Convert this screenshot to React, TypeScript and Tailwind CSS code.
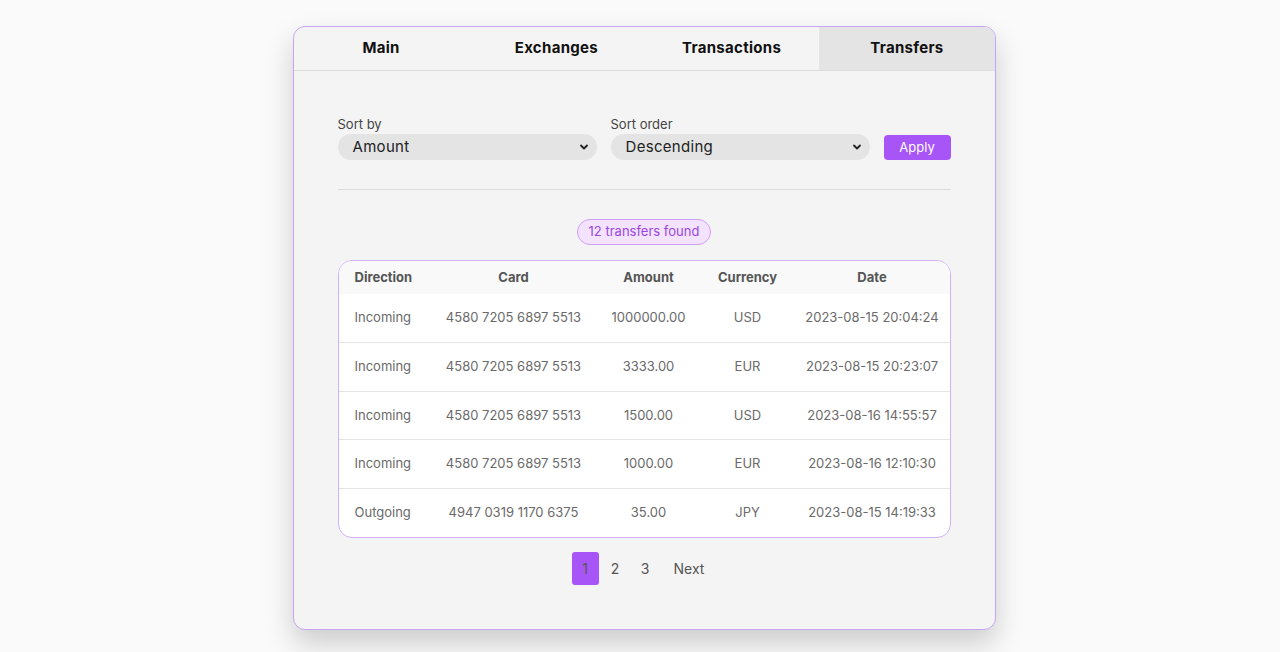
import React, { useState } from 'react';

const tabs = ['Main', 'Exchanges', 'Transactions', 'Transfers'];

const transfers = [
  { direction: 'Incoming', card: '4580 7205 6897 5513', amount: '1000000.00', currency: 'USD', date: '2023-08-15 20:04:24' },
  { direction: 'Incoming', card: '4580 7205 6897 5513', amount: '3333.00', currency: 'EUR', date: '2023-08-15 20:23:07' },
  { direction: 'Incoming', card: '4580 7205 6897 5513', amount: '1500.00', currency: 'USD', date: '2023-08-16 14:55:57' },
  { direction: 'Incoming', card: '4580 7205 6897 5513', amount: '1000.00', currency: 'EUR', date: '2023-08-16 12:10:30' },
  { direction: 'Outgoing', card: '4947 0319 1170 6375', amount: '35.00', currency: 'JPY', date: '2023-08-15 14:19:33' },
];

const Chevron = () => (
  <svg width="10" height="10" viewBox="0 0 10 10" className="text-[#222]">
    <path d="M2 3.5 L5 6.5 L8 3.5" fill="none" stroke="currentColor" strokeWidth="1.8" strokeLinecap="round" strokeLinejoin="round" />
  </svg>
);

const App = () => {
  const [tab, setTab] = useState<string>('Transfers');
  const [page, setPage] = useState<number>(1);

  return (
    <div className="min-h-[652px] bg-[#fafafa] flex justify-center pt-[26px] pl-[8px] font-['Inter',sans-serif]">
      <div className="w-[703px] h-[604px] bg-[#f4f4f4] border border-[#c9a3f5] rounded-[12px] shadow-[0_14px_28px_rgba(0,0,0,0.18)] overflow-hidden flex flex-col">
        <div className="grid grid-cols-4 h-[44px] border-b border-[#dcdcdc] shrink-0">
          {tabs.map((t) => (
            <button
              key={t}
              onClick={() => setTab(t)}
              className={`text-[15px] font-bold text-[#111] tracking-[0.3px] ${tab === t ? 'bg-[#e4e4e4]' : ''}`}
            >
              {t}
            </button>
          ))}
        </div>

        <div className="px-[44px] pt-[45px] flex flex-col">
          <div className="flex items-end gap-[14px]">
            <label className="flex flex-col w-[259px]">
              <span className="text-[13px] text-[#444] leading-[16px] mb-[2px]">Sort by</span>
              <div className="h-[26px] bg-[#e4e4e4] rounded-full flex items-center pl-[15px] pr-[8px]">
                <span className="text-[15px] text-[#222] flex-1 tracking-[0.3px]">Amount</span>
                <Chevron />
              </div>
            </label>
            <label className="flex flex-col w-[259px]">
              <span className="text-[13px] text-[#444] leading-[16px] mb-[2px]">Sort order</span>
              <div className="h-[26px] bg-[#e4e4e4] rounded-full flex items-center pl-[15px] pr-[8px]">
                <span className="text-[15px] text-[#222] flex-1 tracking-[0.3px]">Descending</span>
                <Chevron />
              </div>
            </label>
            <button className="w-[67px] h-[25px] bg-[#a855f7] text-white text-[13px] rounded-[4px]">
              Apply
            </button>
          </div>

          <div className="h-px bg-[#dcdcdc] mt-[29px]" />

          <div className="flex justify-center mt-[29px]">
            <span className="h-[26px] px-[11px] flex items-center rounded-full bg-[#f3e3ff] border border-[#cf9ff7] text-[13px] text-[#9b46e3]">
              12 transfers found
            </span>
          </div>

          <div className="mt-[15px] border border-[#d4b0f7] rounded-[14px] overflow-hidden bg-white">
            <table className="w-full table-fixed border-collapse text-[13px]">
              <colgroup>
                <col className="w-[94px]" />
                <col className="w-[162px]" />
                <col className="w-[108px]" />
                <col className="w-[90px]" />
                <col className="w-[159px]" />
              </colgroup>
              <thead>
                <tr className="h-[33px] bg-[#f9f9f9] text-[#555]">
                  <th className="text-left pl-[16px] font-bold">Direction</th>
                  <th className="text-center font-bold">Card</th>
                  <th className="text-center font-bold">Amount</th>
                  <th className="text-center font-bold">Currency</th>
                  <th className="text-center font-bold">Date</th>
                </tr>
              </thead>
              <tbody>
                {transfers.map((r, i) => (
                  <tr key={i} className={`h-[48.5px] text-[#6a6a6a] ${i > 0 ? 'border-t border-[#e4e4e4]' : ''}`}>
                    <td className="pl-[16px]">{r.direction}</td>
                    <td className="text-center">{r.card}</td>
                    <td className="text-center">{r.amount}</td>
                    <td className="text-center">{r.currency}</td>
                    <td className="text-center">{r.date}</td>
                  </tr>
                ))}
              </tbody>
            </table>
          </div>

          <div className="flex justify-center items-center mt-[14px] text-[14px] text-[#555]">
            {[1, 2, 3].map((n) => (
              <button
                key={n}
                onClick={() => setPage(n)}
                className={`w-[27px] h-[33px] rounded-[3px] mr-[3px] ${page === n ? 'bg-[#a855f7]' : ''}`}
              >
                {n}
              </button>
            ))}
            <button className="h-[33px] px-[12px]">Next</button>
          </div>
        </div>
      </div>
    </div>
  );
};

export default App;
